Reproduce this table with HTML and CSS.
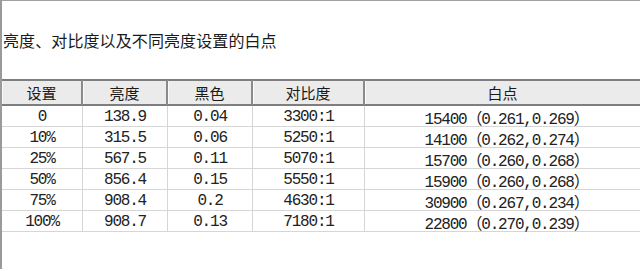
FILE: index.html
```html
<!DOCTYPE html>
<html lang="zh">
<head>
<meta charset="utf-8">
<link rel="stylesheet" href="styles.css">
</head>
<body>
<div class="sheet">
  <div class="title">亮度、对比度以及不同亮度设置的白点</div>
  <div class="grid">
    <div class="hd">设置</div><div class="hd">亮度</div><div class="hd">黑色</div><div class="hd">对比度</div><div class="hd last">白点</div>

    <div class="c">0</div><div class="c">138.9</div><div class="c">0.04</div><div class="c">3300:1</div><div class="c last">15400（0.261,0.269）</div>
    <div class="c">10%</div><div class="c">315.5</div><div class="c">0.06</div><div class="c">5250:1</div><div class="c last">14100（0.262,0.274）</div>
    <div class="c">25%</div><div class="c">567.5</div><div class="c">0.11</div><div class="c">5070:1</div><div class="c last">15700（0.260,0.268）</div>
    <div class="c">50%</div><div class="c">856.4</div><div class="c">0.15</div><div class="c">5550:1</div><div class="c last">15900（0.260,0.268）</div>
    <div class="c">75%</div><div class="c">908.4</div><div class="c">0.2</div><div class="c">4630:1</div><div class="c last">30900（0.267,0.234）</div>
    <div class="c">100%</div><div class="c">908.7</div><div class="c">0.13</div><div class="c">7180:1</div><div class="c last">22800（0.270,0.239）</div>
  </div>
</div>
</body>
</html>
```

FILE: styles.css
```css
html, body {
  margin: 0;
  padding: 0;
  background: #ffffff;
}

.sheet {
  width: 640px;
  height: 269px;
  box-sizing: border-box;
  border-left: 2px solid #9a9a9a;
  border-top: 1px solid #a0a0a0;
  overflow: hidden;
  background: #fff;
}

.title {
  height: 78px;
  display: flex;
  align-items: center;
  padding-left: 1px;
  box-sizing: border-box;
  font-family: "Noto Sans CJK SC", sans-serif;
  font-size: 16px;
  color: #1a1a1a;
  letter-spacing: 0.1px;
}

.grid {
  display: grid;
  grid-template-columns: 83px 85px 85px 112px 1fr;
  grid-template-rows: 27px repeat(6, 21px);
  margin-left: -2px;
}

.hd {
  background: #ebebeb;
  border-top: 2px solid #7e7e7e;
  border-bottom: 2px solid #7e7e7e;
  border-right: 2px solid #8a8a8a;
  box-shadow: inset 1px 0 0 #fafafa;
  display: flex;
  align-items: center;
  justify-content: center;
  font-family: "Noto Sans CJK SC", sans-serif;
  font-size: 15px;
  color: #1a1a1a;
  padding-bottom: 1px;
}

.hd:first-child {
  border-left: 2px solid #9a9a9a;
}

.hd.last {
  border-right: none;
}

.c {
  border-right: 1px solid #d6d6d6;
  border-bottom: 1px solid #d6d6d6;
  display: flex;
  align-items: center;
  justify-content: center;
  font-family: "Liberation Mono", "Noto Sans CJK SC", monospace;
  font-size: 16px;
  letter-spacing: -1.2px;
  color: #222;
  white-space: pre;
  padding-top: 1px;
}

.grid > .c:nth-child(5n+1) {
  border-left: 2px solid #9a9a9a;
}

.c.last {
  border-right: none;
  padding-left: 8px;
}
```
